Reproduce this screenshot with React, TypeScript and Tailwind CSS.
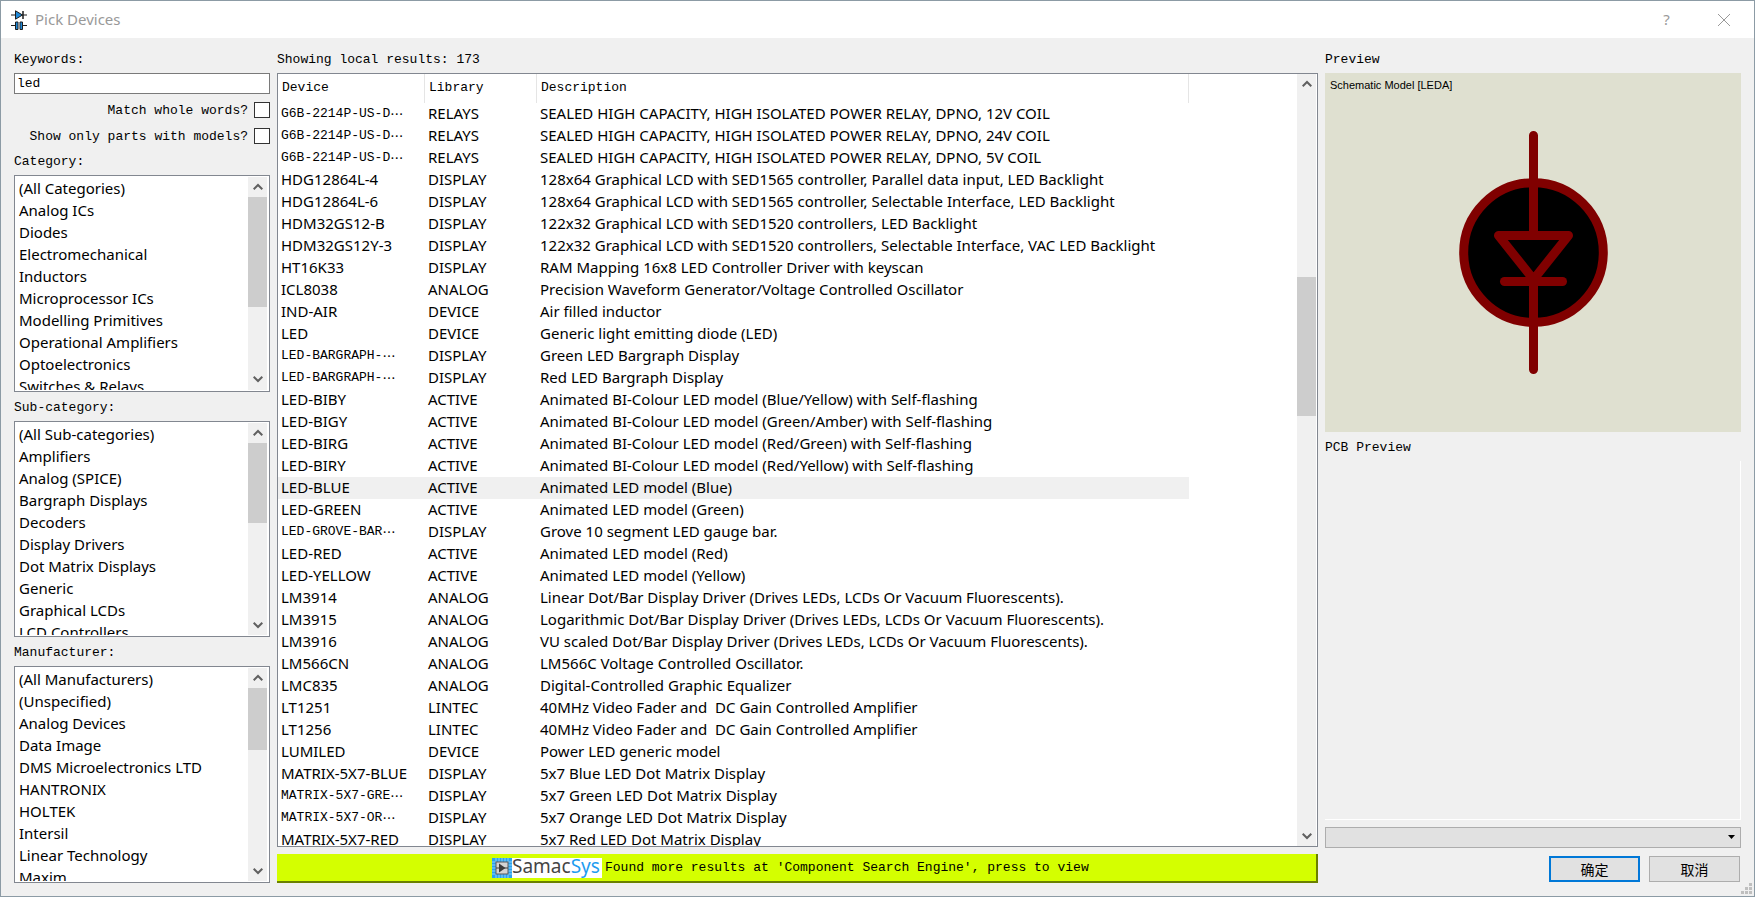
import React, { useState } from "react";

type Device = {
  name: string;
  library: string;
  description: string;
  cut?: boolean; // name too long for the column
};

const categories = [
  "(All Categories)",
  "Analog ICs",
  "Diodes",
  "Electromechanical",
  "Inductors",
  "Microprocessor ICs",
  "Modelling Primitives",
  "Operational Amplifiers",
  "Optoelectronics",
  "Switches & Relays",
];

const subCategories = [
  "(All Sub-categories)",
  "Amplifiers",
  "Analog (SPICE)",
  "Bargraph Displays",
  "Decoders",
  "Display Drivers",
  "Dot Matrix Displays",
  "Generic",
  "Graphical LCDs",
  "LCD Controllers",
];

const manufacturers = [
  "(All Manufacturers)",
  "(Unspecified)",
  "Analog Devices",
  "Data Image",
  "DMS Microelectronics LTD",
  "HANTRONIX",
  "HOLTEK",
  "Intersil",
  "Linear Technology",
  "Maxim",
];

const devices: Device[] = [
  { name: "G6B-2214P-US-D", cut: true, library: "RELAYS", description: "SEALED HIGH CAPACITY, HIGH ISOLATED POWER RELAY, DPNO, 12V COIL" },
  { name: "G6B-2214P-US-D", cut: true, library: "RELAYS", description: "SEALED HIGH CAPACITY, HIGH ISOLATED POWER RELAY, DPNO, 24V COIL" },
  { name: "G6B-2214P-US-D", cut: true, library: "RELAYS", description: "SEALED HIGH CAPACITY, HIGH ISOLATED POWER RELAY, DPNO, 5V COIL" },
  { name: "HDG12864L-4", library: "DISPLAY", description: "128x64 Graphical LCD with SED1565 controller, Parallel data input, LED Backlight" },
  { name: "HDG12864L-6", library: "DISPLAY", description: "128x64 Graphical LCD with SED1565 controller, Selectable Interface, LED Backlight" },
  { name: "HDM32GS12-B", library: "DISPLAY", description: "122x32 Graphical LCD with SED1520 controllers, LED Backlight" },
  { name: "HDM32GS12Y-3", library: "DISPLAY", description: "122x32 Graphical LCD with SED1520 controllers, Selectable Interface, VAC LED Backlight" },
  { name: "HT16K33", library: "DISPLAY", description: "RAM Mapping 16x8 LED Controller Driver with keyscan" },
  { name: "ICL8038", library: "ANALOG", description: "Precision Waveform Generator/Voltage Controlled Oscillator" },
  { name: "IND-AIR", library: "DEVICE", description: "Air filled inductor" },
  { name: "LED", library: "DEVICE", description: "Generic light emitting diode (LED)" },
  { name: "LED-BARGRAPH-", cut: true, library: "DISPLAY", description: "Green LED Bargraph Display" },
  { name: "LED-BARGRAPH-", cut: true, library: "DISPLAY", description: "Red LED Bargraph Display" },
  { name: "LED-BIBY", library: "ACTIVE", description: "Animated BI-Colour LED model (Blue/Yellow) with Self-flashing" },
  { name: "LED-BIGY", library: "ACTIVE", description: "Animated BI-Colour LED model (Green/Amber) with Self-flashing" },
  { name: "LED-BIRG", library: "ACTIVE", description: "Animated BI-Colour LED model (Red/Green) with Self-flashing" },
  { name: "LED-BIRY", library: "ACTIVE", description: "Animated BI-Colour LED model (Red/Yellow) with Self-flashing" },
  { name: "LED-BLUE", library: "ACTIVE", description: "Animated LED model (Blue)" },
  { name: "LED-GREEN", library: "ACTIVE", description: "Animated LED model (Green)" },
  { name: "LED-GROVE-BAR", cut: true, library: "DISPLAY", description: "Grove 10 segment LED gauge bar." },
  { name: "LED-RED", library: "ACTIVE", description: "Animated LED model (Red)" },
  { name: "LED-YELLOW", library: "ACTIVE", description: "Animated LED model (Yellow)" },
  { name: "LM3914", library: "ANALOG", description: "Linear Dot/Bar Display Driver (Drives LEDs, LCDs Or Vacuum Fluorescents)." },
  { name: "LM3915", library: "ANALOG", description: "Logarithmic Dot/Bar Display Driver (Drives LEDs, LCDs Or Vacuum Fluorescents)." },
  { name: "LM3916", library: "ANALOG", description: "VU scaled Dot/Bar Display Driver (Drives LEDs, LCDs Or Vacuum Fluorescents)." },
  { name: "LM566CN", library: "ANALOG", description: "LM566C Voltage Controlled Oscillator." },
  { name: "LMC835", library: "ANALOG", description: "Digital-Controlled Graphic Equalizer" },
  { name: "LT1251", library: "LINTEC", description: "40MHz Video Fader and  DC Gain Controlled Amplifier" },
  { name: "LT1256", library: "LINTEC", description: "40MHz Video Fader and  DC Gain Controlled Amplifier" },
  { name: "LUMILED", library: "DEVICE", description: "Power LED generic model" },
  { name: "MATRIX-5X7-BLUE", library: "DISPLAY", description: "5x7 Blue LED Dot Matrix Display" },
  { name: "MATRIX-5X7-GRE", cut: true, library: "DISPLAY", description: "5x7 Green LED Dot Matrix Display" },
  { name: "MATRIX-5X7-OR", cut: true, library: "DISPLAY", description: "5x7 Orange LED Dot Matrix Display" },
  { name: "MATRIX-5X7-RED", library: "DISPLAY", description: "5x7 Red LED Dot Matrix Display" },
];

function Chevron({ up }: { up?: boolean }) {
  return (
    <svg width="10" height="8" viewBox="0 0 10 8" fill="none" stroke="#606060" strokeWidth="2">
      <path d={up ? "M0.7 6.3L5 2l4.3 4.3" : "M0.7 1.7L5 6l4.3-4.3"} />
    </svg>
  );
}

/** start and size are percentages of the track */
function Scrollbar({ start, size }: { start: number; size: number }) {
  return (
    <div className="flex w-[19px] shrink-0 flex-col bg-[#f0f0f0]">
      <button type="button" aria-label="Scroll up" className="flex h-5 items-center justify-center">
        <Chevron up />
      </button>
      <div className="min-h-0 flex-1">
        <div style={{ height: `${start}%` }} />
        <div className="bg-[#cdcdcd]" style={{ height: `${size}%` }} />
      </div>
      <button type="button" aria-label="Scroll down" className="flex h-[21px] items-center justify-center">
        <Chevron />
      </button>
    </div>
  );
}

function FilterList({ id, label, items, thumb }: { id: string; label: string; items: string[]; thumb: number }) {
  const [selected, setSelected] = useState("");

  return (
    <section className="flex min-h-0 flex-1 flex-col">
      <h2 id={id} className="h-[29px] shrink-0 pt-1 leading-6">
        {label}
      </h2>
      <div className="flex min-h-0 flex-1 border border-[#828790] bg-white py-px pr-[2px]">
        <ul
          role="listbox"
          aria-labelledby={id}
          className="min-w-0 flex-1 overflow-hidden font-['Noto_Sans',sans-serif] text-[15px] leading-[22px]"
        >
          {items.map((item) => (
            <li
              key={item}
              role="option"
              aria-selected={item === selected}
              onClick={() => setSelected(item)}
              className="truncate pl-1"
            >
              {item}
            </li>
          ))}
        </ul>
        <Scrollbar start={0} size={thumb} />
      </div>
    </section>
  );
}

function AppIcon() {
  return (
    <svg width="16" height="20" viewBox="0 0 16 20" stroke="#1c1c1c">
      <path d="M0 5h16" />
      <path d="M4.5 0.8v8.400L11.500 5z" fill="#1e88d8" />
      <path d="M12 1v8" strokeWidth="1.5" />
      <path d="M0 15.500h4M12 15.500h4" />
      <path d="M4.500 12h2.500v7.500h-2.500zM9 12h2.500v7.500H9z" fill="#1e88d8" />
    </svg>
  );
}

function SamacSysLogo() {
  return (
    <span className="flex h-5 w-[110px] items-center overflow-hidden bg-white">
      <svg width="20" height="20" viewBox="0 0 20 20" className="shrink-0">
        <rect width="20" height="20" fill="#2ba3ee" />
        <path
          d="M4 0v4M7 0v4M10 0v4M13 0v4M16 0v4M4 16v4M7 16v4M10 16v4M13 16v4M16 16v4M0 4h4M0 7h4M0 10h4M0 13h4M0 16h4M16 4h4M16 7h4M16 10h4M16 13h4M16 16h4"
          stroke="#8fd0fa"
        />
        <rect x="4" y="4" width="12" height="12" fill="#d4d4d4" stroke="#5a5a5a" />
        <path d="M4 10h12" stroke="#3c3c3c" />
        <path d="M7 5.500v9l6.500-4.500z" fill="#3c3c3c" />
      </svg>
      <span className="pb-1 font-['Noto_Sans',sans-serif] text-[19px] leading-5 text-[#454545]">
        Samac<span className="text-[#1e9cf0]">Sys</span>
      </span>
    </span>
  );
}

function SchematicLed() {
  return (
    <svg viewBox="0 0 416 359" className="absolute inset-0 h-full w-full" fill="none" stroke="#800000" strokeWidth="9" strokeLinecap="round" strokeLinejoin="round">
      <circle cx="208.500" cy="179.500" r="69.800" fill="#000" />
      <path d="M208.500 62.500v100M208.500 208.500v88" />
      <path d="M173.500 162.500h70l-35 44z" />
      <path d="M179.500 208.500h58" />
    </svg>
  );
}

export default function App() {
  const [keywords, setKeywords] = useState("led");
  const [current, setCurrent] = useState(17);

  return (
    <div className="flex h-screen flex-col overflow-hidden border border-[#8c9ba5] bg-[#f0f0f0] font-['Liberation_Mono','Noto_Sans_CJK_SC',monospace] text-[13px] text-black">
      {/* title bar */}
      <header className="flex h-[37px] shrink-0 items-center bg-white pl-[10px] font-['Noto_Sans',sans-serif] text-[#999999]">
        <AppIcon />
        <h1 className="flex-1 pl-2 text-[15px]">Pick Devices</h1>
        <button type="button" aria-label="Help" className="w-[55px] text-[15px]">
          ?
        </button>
        <button type="button" aria-label="Close" className="flex w-[60px] justify-center">
          <svg width="12" height="12" viewBox="0 0 12 12" stroke="#999999">
            <path d="M0 0l12 12M12 0L0 12" />
          </svg>
        </button>
      </header>

      <main className="flex min-h-0 flex-1 gap-[7px] px-[13px] pb-[13px]">
        {/* filters */}
        <div className="flex w-64 shrink-0 flex-col">
          <label htmlFor="keywords" className="h-[35px] shrink-0 pt-[10px] leading-6">
            Keywords:
          </label>
          <input
            id="keywords"
            type="text"
            value={keywords}
            onChange={(e) => setKeywords(e.target.value)}
            className="h-[21px] w-full shrink-0 border border-[#7a7a7a] bg-white px-[2px] outline-none"
          />
          <div className="flex shrink-0 flex-col items-end gap-[10px] pt-2 pb-[2px]">
            <label className="flex h-4 items-center gap-[6px]">
              <span className="pt-[2px]">Match whole words?</span>
              <input type="checkbox" className="size-4 appearance-none border border-[#333333] bg-white" />
            </label>
            <label className="flex h-4 items-center gap-[6px]">
              <span className="pt-[2px]">Show only parts with models?</span>
              <input type="checkbox" className="size-4 appearance-none border border-[#333333] bg-white" />
            </label>
          </div>
          <FilterList id="category" label="Category:" items={categories} thumb={64} />
          <FilterList id="sub-category" label="Sub-category:" items={subCategories} thumb={47} />
          <FilterList id="manufacturer" label="Manufacturer:" items={manufacturers} thumb={36} />
        </div>

        {/* results */}
        <div className="flex min-w-0 flex-1 flex-col">
          <h2 id="results" className="h-[35px] shrink-0 pt-[10px] leading-6">
            Showing local results: 173
          </h2>
          <div className="flex min-h-0 flex-1 border border-[#828790] bg-white pr-px">
            <div className="min-w-0 flex-1 overflow-hidden">
              <table aria-labelledby="results" className="w-[911px] table-fixed border-separate border-spacing-0 text-left">
                <colgroup>
                  <col className="w-[147px]" />
                  <col className="w-[112px]" />
                  <col className="w-[652px]" />
                </colgroup>
                <thead>
                  <tr className="h-[29px] leading-5">
                    <th className="border-r border-[#e5e5e5] p-0 pb-[2px] pl-1 font-normal">Device</th>
                    <th className="border-r border-[#e5e5e5] p-0 pb-[2px] pl-1 font-normal">Library</th>
                    <th className="border-r border-[#e5e5e5] p-0 pb-[2px] pl-1 font-normal">Description</th>
                  </tr>
                </thead>
                <tbody className="font-['Noto_Sans',sans-serif] text-[15px] leading-5 whitespace-pre">
                  {devices.map((d, i) => (
                    <tr key={i} onClick={() => setCurrent(i)} className={i === current ? "h-[22px] bg-[#f0f0f0]" : "h-[22px]"}>
                      <td className="overflow-hidden p-0 pl-[3px] align-top">
                        {d.cut ? (
                          <div className="flex h-[22px] items-center font-['Liberation_Mono',monospace] text-[13px]">
                            {d.name}
                            <span className="font-['Noto_Sans_CJK_SC',sans-serif]">⋯</span>
                          </div>
                        ) : (
                          d.name
                        )}
                      </td>
                      <td className="overflow-hidden p-0 pl-[3px] align-top">{d.library}</td>
                      <td className="overflow-hidden p-0 pl-[3px] align-top">{d.description}</td>
                    </tr>
                  ))}
                </tbody>
              </table>
            </div>
            <Scrollbar start={25} size={19} />
          </div>
          <button
            type="button"
            className="mt-[7px] flex h-[29px] shrink-0 items-center justify-center gap-[3px] border-r-2 border-b-2 border-[#6b8000] bg-[#d4ff00]"
          >
            <SamacSysLogo />
            <span className="w-[496px] text-left whitespace-nowrap">
              Found more results at 'Component Search Engine', press to view
            </span>
          </button>
        </div>

        {/* previews */}
        <div className="flex w-[416px] shrink-0 flex-col">
          <h2 className="h-[35px] shrink-0 pt-[10px] leading-6">Preview</h2>
          <div className="relative h-[359px] shrink-0 bg-[#dfe0d0] px-[5px] py-1">
            <SchematicLed />
            <p className="font-['Liberation_Sans',sans-serif] text-[11px] leading-4">Schematic Model [LEDA]</p>
          </div>
          <h2 className="h-[29px] shrink-0 pt-1 leading-6">PCB Preview</h2>
          <div className="min-h-0 flex-1 border-r border-b border-white" />
          <div className="relative mt-[7px] shrink-0">
            <select aria-label="PCB package" className="block h-[21px] w-full appearance-none border border-[#adadad] bg-[#e1e1e1]">
              <option></option>
            </select>
            <svg width="7" height="4" viewBox="0 0 7 4" className="pointer-events-none absolute top-2 right-[6px]">
              <path d="M0 0h7L3.500 4z" />
            </svg>
          </div>
          <div className="flex shrink-0 justify-end gap-[9px] pt-2 pr-px pb-px font-['Noto_Sans_CJK_SC',sans-serif] text-[14px]">
            <button type="button" className="h-[26px] w-[91px] border-2 border-[#0078d7] bg-[#e1e1e1] leading-5">
              确定
            </button>
            <button type="button" className="h-[26px] w-[91px] border border-[#adadad] bg-[#e1e1e1] leading-5">
              取消
            </button>
          </div>
        </div>
      </main>

      {/* resize grip */}
      <svg width="11" height="11" viewBox="0 0 11 11" fill="#bfbfbf" className="absolute right-[3px] bottom-[3px]">
        <path d="M8 0h3v3H8zM4 4h3v3H4zM8 4h3v3H8zM0 8h3v3H0zM4 8h3v3H4zM8 8h3v3H8z" />
      </svg>
    </div>
  );
}
